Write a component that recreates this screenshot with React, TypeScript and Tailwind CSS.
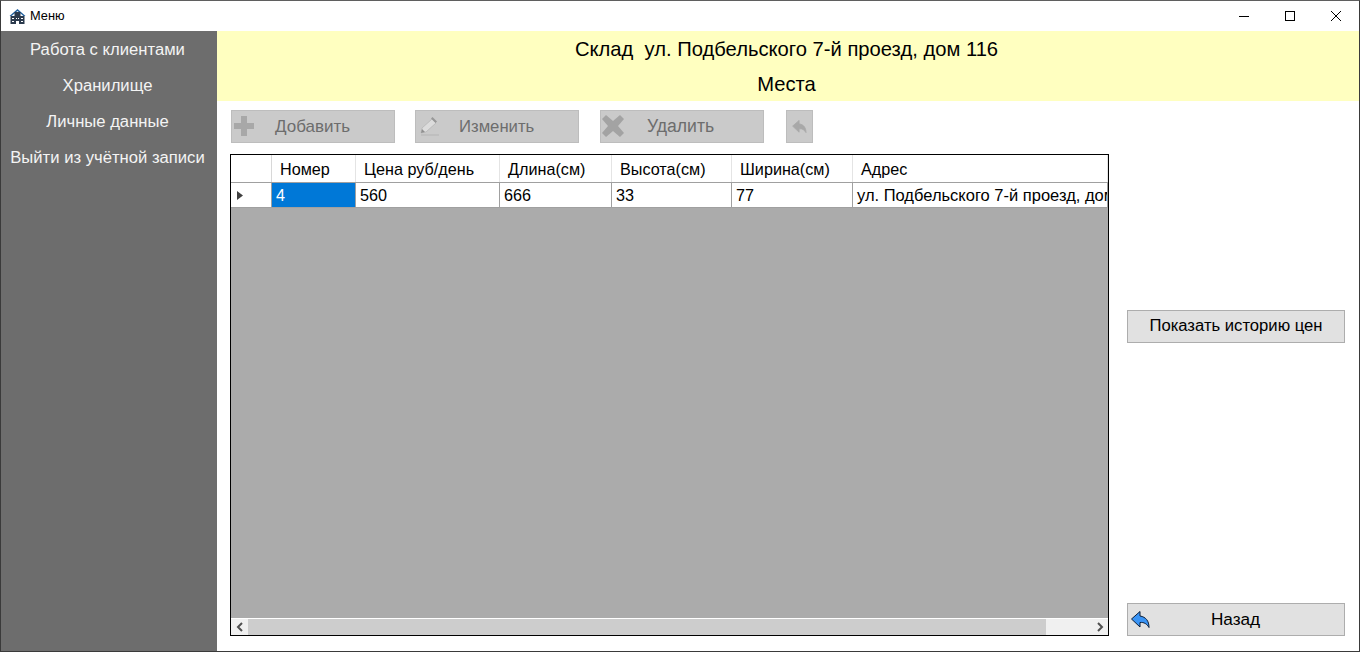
const columns = [
  { title: 'Номер', value: '4', width: 'w-[84px]' },
  { title: 'Цена руб/день', value: '560', width: 'w-[144px]' },
  { title: 'Длина(см)', value: '666', width: 'w-[112px]' },
  { title: 'Высота(см)', value: '33', width: 'w-[120px]' },
  { title: 'Ширина(см)', value: '77', width: 'w-[121px]' },
  { title: 'Адрес', value: 'ул. Подбельского 7-й проезд, дом 116', width: 'w-[255px]' },
];

function BuildingIcon() {
  return (
    <svg width="17" height="17" viewBox="0 0 17 17">
      <path d="M0.500 8 L8.500 1 L16.500 8 L14.500 8 L8.500 3 L2.500 8 Z" fill="#1f5f9e" />
      <rect x="5.500" y="4" width="6" height="5" fill="#2b3a4d" />
      <rect x="1.500" y="8" width="14" height="8" fill="#2b3a4d" />
      <path d="M3 10h2v1H3zM7 10h1v1H7zM9 10h1v1H9zM12 10h2v1h-2zM3 13h2v1H3zM7 13h3v3H7zM12 13h2v1h-2z" fill="#fff" />
    </svg>
  );
}

function WindowControls() {
  return (
    <div className="flex items-center text-black">
      <div className="w-[46px] flex justify-center">
        <svg width="10" height="10" viewBox="0 0 10 10"><path d="M0 5.500h10" stroke="#000" strokeWidth="1" /></svg>
      </div>
      <div className="w-[46px] flex justify-center">
        <svg width="10" height="10" viewBox="0 0 10 10"><rect x="0.500" y="0.500" width="9" height="9" fill="none" stroke="#000" strokeWidth="1" /></svg>
      </div>
      <div className="w-[46px] flex justify-center">
        <svg width="10" height="10" viewBox="0 0 10 10"><path d="M0 0L10 10M10 0L0 10" stroke="#000" strokeWidth="1" /></svg>
      </div>
    </div>
  );
}

function PlusIcon() {
  return (
    <svg width="22" height="22" viewBox="0 0 22 22">
      <path d="M8 1h6v7h7v6h-7v7H8v-7H1V8h7z" fill="#a8a8a8" />
    </svg>
  );
}

function PencilIcon() {
  return (
    <svg width="22" height="24" viewBox="0 0 22 24">
      <path d="M15 4l4 4L9 17l-5 1 1-5z" fill="#dcdcdc" stroke="#bcbcbc" strokeWidth="1" />
      <path d="M15.500 2l4.500 4.500-1.500 1.500L14 3.500z" fill="#989898" />
      <path d="M4 18l1-4 3 3z" fill="#8f8f8f" />
      <path d="M4 20h18" stroke="#b4b4b4" strokeWidth="1" />
    </svg>
  );
}

function CrossIcon() {
  return (
    <svg width="22" height="22" viewBox="0 0 22 22">
      <path d="M4 0l7 6 7-6 4 4-6 7 6 7-4 4-7-6-7 6-4-4 6-7-6-7z" fill="#a3a3a3" />
    </svg>
  );
}

function BackArrow({ fill, stroke, width, height }: { fill: string; stroke: string; width: number; height: number }) {
  return (
    <svg width={width} height={height} viewBox="0 0 19 17">
      <path d="M9 0.500L0.500 8 9 16v-4.500c4-.5 7 1.500 9 5C18 10 15 6 9 5z" fill={fill} stroke={stroke} strokeWidth="1" />
    </svg>
  );
}

function ToolbarButton({ label, icon, textClass }: { label: string; icon: React.ReactNode; textClass: string }) {
  return (
    <div className="relative flex items-center w-[164px] h-[33px] bg-[#cacaca] border border-[#bdbdbd] text-[#6d6d6d]">
      <div className="absolute left-px top-[4px]">{icon}</div>
      <span className={textClass}>{label}</span>
    </div>
  );
}

export default function App() {
  return (
    <div className="w-[1360px] h-[652px] flex flex-col overflow-hidden bg-white border border-[#3a3a3a] border-t-[#5f5f5f] text-[16px] font-['Liberation_Sans',Arial,sans-serif]">
      <div className="h-[30px] shrink-0 flex items-center justify-between bg-white">
        <div className="flex items-center pl-[8px] gap-[4px] text-[12.8px] text-black">
          <BuildingIcon />
          <span>Меню</span>
        </div>
        <WindowControls />
      </div>

      <div className="flex-1 flex min-h-0">
        <aside className="w-[216px] shrink-0 bg-[#6d6d6d] text-[#f4f4f4] flex flex-col pt-px pr-[3px] text-[16.65px]">
          {['Работа с клиентами', 'Хранилище', 'Личные данные', 'Выйти из учётной записи'].map((item) => (
            <div key={item} className="h-[36px] flex items-center justify-center whitespace-nowrap">
              {item}
            </div>
          ))}
        </aside>

        <main className="flex-1 flex flex-col min-w-0">
          <div className="h-[70px] shrink-0 bg-[#ffffc0] text-black text-[20.2px] pr-[3px]">
            <div className="h-[36px] flex items-center justify-center whitespace-pre">Склад  ул. Подбельского 7-й проезд, дом 116</div>
            <div className="h-[34px] flex items-center justify-center">Места</div>
          </div>

          <div className="flex-1 flex min-h-0">
            <div className="w-[893px] pl-[13px] pt-[9px]">
              <div className="flex items-center h-[33px] ml-px text-[16.7px]">
                <ToolbarButton label="Добавить" icon={<PlusIcon />} textClass="pl-[43px] text-[17px]" />
                <div className="w-[20px]" />
                <ToolbarButton label="Изменить" icon={<PencilIcon />} textClass="pl-[43px]" />
                <div className="w-[21px]" />
                <ToolbarButton label="Удалить" icon={<CrossIcon />} textClass="pl-[46px] text-[17.6px]" />
                <div className="w-[22px]" />
                <div className="w-[27px] h-[33px] flex items-center justify-center bg-[#cacaca] border border-[#bdbdbd]">
                  <BackArrow fill="#a8a8a8" stroke="#a8a8a8" width={15} height={13} />
                </div>
              </div>

              <div className="mt-[11px] w-[879px] h-[482px] flex flex-col border border-black bg-[#ababab] text-[16.2px]">
                <div className="h-[27px] shrink-0 flex bg-white text-black">
                  <div className="w-[41px] shrink-0 border-r border-[#d8d8d8]" />
                  {columns.map((col) => (
                    <div key={col.title} className={`${col.width} shrink-0 border-r border-[#e4e4e4] flex items-center pl-2 pt-[2px] overflow-hidden whitespace-nowrap`}>
                      {col.title}
                    </div>
                  ))}
                </div>
                <div className="h-[26px] shrink-0 flex bg-white text-black border-t border-b border-[#a0a0a0]">
                  <div className="w-[41px] shrink-0 border-r border-[#a0a0a0] flex items-center pl-[6px]">
                    <svg width="6" height="9" viewBox="0 0 6 9"><path d="M0 0l6 4.500-6 4.500z" fill="#404040" /></svg>
                  </div>
                  {columns.map((col, i) => (
                    <div
                      key={col.title}
                      className={`${col.width} shrink-0 border-r border-[#a0a0a0] flex items-center pl-1 overflow-hidden whitespace-nowrap ${i === 0 ? 'bg-[#0078d7] text-white' : ''} ${i === 5 ? 'text-[16.5px]' : ''}`}
                    >
                      {col.value}
                    </div>
                  ))}
                </div>
                <div className="flex-1" />
                <div className="h-[17px] shrink-0 flex bg-[#f0f0f0] border-t border-white">
                  <div className="w-[17px] flex items-center justify-center">
                    <svg width="8" height="10" viewBox="0 0 8 10"><path d="M6 1L2 5l4 4" fill="none" stroke="#505050" strokeWidth="2" /></svg>
                  </div>
                  <div className="w-[798px] bg-[#cdcdcd]" />
                  <div className="flex-1" />
                  <div className="w-[16px] flex items-center justify-center">
                    <svg width="8" height="10" viewBox="0 0 8 10"><path d="M2 1l4 4-4 4" fill="none" stroke="#505050" strokeWidth="2" /></svg>
                  </div>
                </div>
              </div>
            </div>

            <div className="flex-1 pl-[17px] pt-[209px]">
              <div className="w-[218px] h-[33px] flex items-center justify-center bg-[#e1e1e1] border border-[#adadad] text-black text-[16.65px]">
                Показать историю цен
              </div>
              <div className="relative mt-[260px] w-[218px] h-[33px] flex items-center justify-center bg-[#e1e1e1] border border-[#adadad] text-black text-[17.2px]">
                <div className="absolute left-[3px] top-[7px]">
                  <BackArrow fill="#3a94f5" stroke="#0b1f3a" width={19} height={17} />
                </div>
                <span className="pr-[1px]">Назад</span>
              </div>
            </div>
          </div>
        </main>
      </div>
    </div>
  );
}
